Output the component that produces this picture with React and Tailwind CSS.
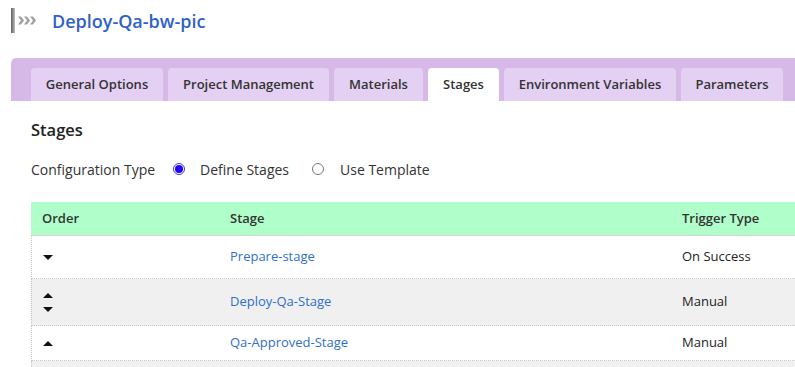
import React from "react";

const tabs = [
  { label: "General Options", w: "w-[132px]" },
  { label: "Project Management", w: "w-[161px]" },
  { label: "Materials", w: "w-[89px]" },
  { label: "Stages", w: "w-[71px]", active: true },
  { label: "Environment Variables", w: "w-[172px]" },
  { label: "Parameters", w: "w-[102px]" },
];

function Up() {
  return (
    <svg width="10" height="5" viewBox="0 0 10 5" className="block">
      <polygon points="0,5 10,5 5,0" fill="#111" />
    </svg>
  );
}
function Down() {
  return (
    <svg width="10" height="5" viewBox="0 0 10 5" className="block">
      <polygon points="0,0 10,0 5,5" fill="#111" />
    </svg>
  );
}

const rows = [
  { name: "Prepare-stage", trigger: "On Success", h: "h-[43px]", bg: "bg-white", order: <Down /> },
  {
    name: "Deploy-Qa-Stage",
    trigger: "Manual",
    h: "h-[47px]",
    bg: "bg-[#f0f0f0]",
    order: (
      <div className="flex flex-col gap-[9px]">
        <Up />
        <Down />
      </div>
    ),
  },
  { name: "Qa-Approved-Stage", trigger: "Manual", h: "h-[35px]", bg: "bg-white", order: <Up /> },
];

export default function App() {
  return (
    <div className="w-[795px] h-[367px] overflow-hidden bg-white font-['Open_Sans',sans-serif] text-[#333]">
      <div className="h-[58px] flex items-start pl-[11px] pt-[5px]">
        <svg width="26" height="25" viewBox="0 0 26 25" className="mt-[3px]">
          <defs>
            <linearGradient id="g" x1="0" x2="1" y1="0" y2="0">
              <stop offset="0" stopColor="#5e5e5e" />
              <stop offset="1" stopColor="#bdbdbd" />
            </linearGradient>
          </defs>
          <rect x="0" y="0" width="4" height="25" fill="url(#g)" />
          <polygon points="7,8.5 10,8.5 13,12.5 10,16.5 7,16.5 10,12.5" fill="#a0a0a0" />
          <polygon points="13,8.5 16,8.5 19,12.5 16,16.5 13,16.5 16,12.5" fill="#a0a0a0" />
          <polygon points="19,8.5 22,8.5 25,12.5 22,16.5 19,16.5 22,12.5" fill="#a0a0a0" />
        </svg>
        <div className="ml-[15px] text-[18px] leading-[24px] font-semibold text-[#2f62c8] mt-[4px]">Deploy-Qa-bw-pic</div>
      </div>
      <div className="ml-[11px] bg-[#d7b9e8] rounded-tl-[5px] pt-[10px] pl-[20px] flex gap-[5px]">
        {tabs.map((t) => (
          <div
            key={t.label}
            className={`${t.w} h-[33px] shrink-0 rounded-t-[4px] flex items-center justify-center text-[13px] font-semibold text-[#333] ${
              t.active ? "bg-white" : "bg-[#e4d0f3]"
            }`}
          >
            {t.label}
          </div>
        ))}
      </div>
      <div className="pl-[31px]">
        <div className="mt-[17px] text-[16.5px] leading-[24px] font-semibold text-[#222]">Stages</div>
        <div className="mt-[17px] flex items-center h-[20px] text-[14px] text-[#333]">
          <span>Configuration Type</span>
          <span className="ml-[18px] w-[12px] h-[12px] rounded-full border border-[#3b3bdc] flex items-center justify-center">
            <span className="w-[8px] h-[8px] rounded-full bg-[#2200ff]" />
          </span>
          <span className="ml-[15px]">Define Stages</span>
          <span className="ml-[23px] w-[12px] h-[12px] rounded-full border border-[#777] bg-white" />
          <span className="ml-[16px]">Use Template</span>
        </div>
        <div className="mt-[23px] w-[800px]">
          <div className="h-[34px] bg-[#b0fec9] flex items-center text-[13px] font-semibold text-[#333] border-b border-[#d6d6d6]">
            <div className="w-[188px] pl-[11px]">Order</div>
            <div className="w-[452px] pl-[11px]">Stage</div>
            <div className="pl-[11px]">Trigger Type</div>
          </div>
          {rows.map((r) => (
            <div
              key={r.name}
              className={`${r.h} ${r.bg} flex items-center text-[13px] border-b border-dotted border-[#c8c8c8] border-l`}
            >
              <div className="w-[187px] pl-[11px]">{r.order}</div>
              <div className="w-[452px] pl-[11px] text-[#2f6fcb]">{r.name}</div>
              <div className="pl-[11px] text-[#222]">{r.trigger}</div>
            </div>
          ))}
          <div className="h-[20px] bg-[#f0f0f0] border-l border-dotted border-[#c8c8c8]" />
        </div>
      </div>
    </div>
  );
}
